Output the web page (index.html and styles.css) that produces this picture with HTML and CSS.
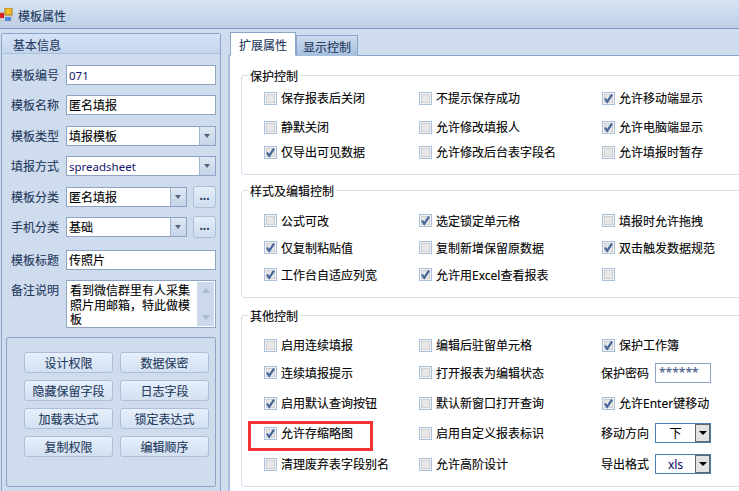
FILE: index.html
```html
<!DOCTYPE html>
<html lang="zh">
<head>
<meta charset="utf-8">
<title>模板属性</title>
<link rel="stylesheet" href="styles.css">
</head>
<body>
<svg class="defs" width="0" height="0" aria-hidden="true"><symbol id="tick" viewBox="0 0 11 11"><path d="M2 5.5 L4.2 8.8 L9 1.6" fill="none" stroke="#44659a" stroke-width="2.2"/></symbol></svg>
<div class="app">
  <header class="titlebar">
    <svg class="appicon" width="14" height="14" viewBox="0 0 14 14"><rect x="0" y="3" width="13" height="11" fill="#c9ccd2"/><rect x="0" y="5" width="4" height="5" fill="#d8201c"/><rect x="5" y="0" width="7" height="7" fill="#f4bd2c" stroke="#a9821e" stroke-width="1"/><rect x="5" y="9" width="6" height="4" fill="#4f8be0"/></svg>
    <span>模板属性</span>
  </header>
  <div class="main">
    <aside class="side">
      <div class="side-head">基本信息</div>
      <div class="form">
        <label class="lbl">模板编号</label><div class="input latin">071</div>
        <label class="lbl">模板名称</label><div class="input">匿名填报</div>
        <label class="lbl">模板类型</label><div class="combo"><span>填报模板</span><i class="drop"></i></div>
        <label class="lbl">填报方式</label><div class="combo"><span class="latin">spreadsheet</span><i class="drop"></i></div>
        <label class="lbl">模板分类</label><div class="pair"><div class="combo"><span>匿名填报</span><i class="drop"></i></div><button class="more">...</button></div>
        <label class="lbl">手机分类</label><div class="pair"><div class="combo"><span>基础</span><i class="drop"></i></div><button class="more">...</button></div>
        <label class="lbl">模板标题</label><div class="input">传照片</div>
        <label class="lbl">备注说明</label>
        <div class="memo"><div class="memo-text">看到微信群里有人采集照片用邮箱，特此做模板</div><div class="memo-bar"><i class="up"></i><i class="down"></i></div></div>
      </div>
      <div class="btnbox">
        <button class="btn">设计权限</button><button class="btn">数据保密</button>
        <button class="btn">隐藏保留字段</button><button class="btn">日志字段</button>
        <button class="btn">加载表达式</button><button class="btn">锁定表达式</button>
        <button class="btn">复制权限</button><button class="btn">编辑顺序</button>
      </div>
    </aside>
    <section class="content">
      <div class="tabs"><div class="tab active">扩展属性</div><div class="tab">显示控制</div></div>
      <div class="panel">
        <fieldset class="group g1">
          <legend>保护控制</legend>
          <div class="opts">
            <div class="opt"><i class="cb"></i>保存报表后关闭</div><div class="opt"><i class="cb"></i>不提示保存成功</div><div class="opt"><i class="cb"><svg><use href="#tick"/></svg></i>允许移动端显示</div>
            <div class="opt"><i class="cb"></i>静默关闭</div><div class="opt"><i class="cb"></i>允许修改填报人</div><div class="opt"><i class="cb"><svg><use href="#tick"/></svg></i>允许电脑端显示</div>
            <div class="opt"><i class="cb"><svg><use href="#tick"/></svg></i>仅导出可见数据</div><div class="opt"><i class="cb"></i>允许修改后台表字段名</div><div class="opt"><i class="cb"></i>允许填报时暂存</div>
          </div>
        </fieldset>
        <fieldset class="group g2">
          <legend>样式及编辑控制</legend>
          <div class="opts">
            <div class="opt"><i class="cb"></i>公式可改</div><div class="opt"><i class="cb"><svg><use href="#tick"/></svg></i>选定锁定单元格</div><div class="opt"><i class="cb"></i>填报时允许拖拽</div>
            <div class="opt"><i class="cb"><svg><use href="#tick"/></svg></i>仅复制粘贴值</div><div class="opt"><i class="cb"></i>复制新增保留原数据</div><div class="opt"><i class="cb"><svg><use href="#tick"/></svg></i>双击触发数据规范</div>
            <div class="opt"><i class="cb"><svg><use href="#tick"/></svg></i>工作台自适应列宽</div><div class="opt"><i class="cb"><svg><use href="#tick"/></svg></i>允许用Excel查看报表</div><div class="opt"><i class="cb"></i></div>
          </div>
        </fieldset>
        <fieldset class="group g3">
          <legend>其他控制</legend>
          <div class="opts">
            <div class="opt"><i class="cb"></i>启用连续填报</div><div class="opt"><i class="cb"></i>编辑后驻留单元格</div><div class="opt"><i class="cb"><svg><use href="#tick"/></svg></i>保护工作簿</div>
            <div class="opt"><i class="cb"><svg><use href="#tick"/></svg></i>连续填报提示</div><div class="opt"><i class="cb"></i>打开报表为编辑状态</div><div class="field"><span>保护密码</span><div class="pwd">******</div></div>
            <div class="opt"><i class="cb"><svg><use href="#tick"/></svg></i>启用默认查询按钮</div><div class="opt"><i class="cb"></i>默认新窗口打开查询</div><div class="opt"><i class="cb"><svg><use href="#tick"/></svg></i>允许Enter键移动</div>
            <div class="opt"><i class="cb"><svg><use href="#tick"/></svg></i>允许存缩略图</div><div class="opt"><i class="cb"></i>启用自定义报表标识</div><div class="field"><span>移动方向</span><div class="sel"><span>下</span><i class="selbtn"></i></div></div>
            <div class="opt"><i class="cb"></i>清理废弃表字段别名</div><div class="opt"><i class="cb"></i>允许高阶设计</div><div class="field"><span>导出格式</span><div class="sel"><span class="xls">xls</span><i class="selbtn"></i></div></div>
          </div>
        </fieldset>
      </div>
    </section>
  </div>
  <div class="redbox"></div>
</div>
</body>
</html>
```
FILE: styles.css
```css
* { box-sizing: border-box; }
html, body { margin: 0; padding: 0; }
body { width: 739px; height: 491px; overflow: hidden; background: #cfdcee; font: 12px/16px "Noto Sans", "Noto Sans CJK SC", sans-serif; color: #000; -webkit-text-stroke: 0.1px; }
.defs { position: absolute; }
.app { position: relative; width: 739px; height: 491px; overflow: hidden; }

.titlebar { height: 29px; display: flex; align-items: center; gap: 4px; padding-top: 6px; padding-bottom: 2px; background: linear-gradient(#d8e4f3, #bccfe6); border-bottom: 1px solid #7f9abd; color: #1e395b; }
.titlebar span { padding-top: 1px; }
.appicon { flex: none; margin-top: -2px; }

.main { display: flex; height: 462px; }

.side { flex: none; width: 220px; margin: 4px 0 0 1px; height: 470px; border: 1px solid #8ba5c8; border-radius: 2px 2px 0 0; color: #1e395b; }
.side-head { height: 20px; padding: 3px 0 0 11px; background: linear-gradient(#d5e3f6, #c3d5ee); border-bottom: 1px solid #a9c0de; line-height: 18px; }
.form { display: grid; grid-template-columns: 55px 150px; grid-template-rows: 30px 31px 30px 31px 30px 33px 30px 48px; padding: 11px 0 0 9px; height: 283px; align-items: start; }
.lbl { line-height: 20px; margin-top: 1px; }
.input { height: 20px; background: #fff; border: 1px solid #8fa4c4; padding: 1px 0 0 2px; line-height: 18px; color: #000; }
.input.latin, .combo > .latin { color: #14146e; font-size: 11.5px; -webkit-text-stroke: 0; }
.combo { height: 20px; flex: 1; min-width: 0; display: flex; background: #fff; border: 1px solid #8fa4c4; line-height: 18px; color: #000; }
.combo > span { flex: 1; padding: 1px 0 0 2px; }
.drop { width: 16px; background: linear-gradient(#dfe8f4, #c5d4e8); border-left: 1px solid #a3b6d0; position: relative; }
.drop::after { content: ""; position: absolute; left: 4px; top: 7px; border: 3px solid transparent; border-width: 4px 3.5px 0; border-top-color: #52637c; }
.pair { display: flex; gap: 6px; align-items: flex-start; }
.more { flex: none; width: 23px; height: 22px; margin-top: -1px; padding: 0 0 3px; font: inherit; font-weight: 700; color: #1e395b; background: linear-gradient(#e4eef9, #cfdded); border: 1px solid #adbed6; border-radius: 3px; }
.memo { height: 48px; display: flex; background: #fff; border: 1px solid #8fa4c4; color: #000; padding: 1px 1px 1px 3px; }
.memo-text { flex: 1; line-height: 14.5px; width: 124px; padding-top: 2px; }
.memo-bar { flex: none; width: 17px; background: #ccd9ea; display: flex; flex-direction: column; justify-content: space-between; align-items: center; padding: 6px 0; }
.up, .down { display: block; border: 5px solid transparent; border-left-width: 4.5px; border-right-width: 4.5px; }
.up { border-top: 0; border-bottom-color: #a9b8cc; }
.down { border-bottom: 0; border-top-color: #a9b8cc; }

.btnbox { margin: 0 0 0 4px; width: 210px; height: 150px; border: 1px solid #8fa4c4; border-radius: 2px; padding: 14px 0 0 17px; display: grid; grid-template-columns: 89px 89px; grid-auto-rows: 21px; gap: 7px; }
.btn { font: inherit; -webkit-text-stroke: inherit; color: #1e395b; padding: 2px 0 0; background: linear-gradient(#e7f0fb, #d2e0f1); border: 1px solid #adbed6; border-radius: 3px; }

.content { flex: 1; min-width: 0; margin-left: 7px; position: relative; }
.tabs { display: flex; align-items: flex-end; height: 27px; padding: 4px 0 0 2px; margin-bottom: -1px; }
.tab { height: 21px; width: 62px; text-align: center; line-height: 23px; color: #1e395b; background: linear-gradient(#cfdcee, #a5bedc); border: 1px solid #88a5cb; border-bottom: 0; position: relative; z-index: 1; }
.tab.active { height: 24px; width: 66px; background: #fff; line-height: 26px; z-index: 2; border-bottom: 1px solid #fff; }
.panel { height: 440px; background: #fff; border-top: 1px solid #88a5cb; border-left: 2px solid #a7bfdf; padding: 11px 0 0 11px; }

.group { margin: 0 -30px 0 0; border: 1px solid #d4dfe9; border-radius: 3px; padding: 0 0 0 22px; min-width: 0; }
.group legend { margin-left: -16px; padding: 0 2px; line-height: 19px; height: 16px; color: #000; }
.opts { display: grid; grid-template-columns: 155px 183px 1fr; align-items: center; }
.g1 { height: 108px; padding-top: 1px; }
.g1 .opts { grid-template-rows: 28px 30px 20px; }
.g2 { height: 116px; margin-top: 7px; padding-top: 9px; }
.g2 .opts { grid-template-rows: 27px 27px 27px; }
.g3 { height: 180px; margin-top: 9px; padding-top: 8px; }
.g3 .opts { grid-template-rows: 28px 27px 34px 26px 36px; }
.opt { display: flex; align-items: center; gap: 4px; line-height: 16px; white-space: nowrap; padding-top: 2px; }
.cb { flex: none; display: block; width: 13px; height: 13px; margin-top: -2px; background: #e7e7e7; border: 1px solid #a9bfdc; box-shadow: inset 0 0 0 1px #f3f3f3, inset 0 0 0 2px #cfcfcf; }
.cb svg { display: block; width: 11px; height: 11px; }

.field { display: flex; align-items: center; margin-left: -1px; }
.field > span { width: 54px; padding-top: 2px; }
.pwd { width: 56px; height: 20px; border: 1px solid #8fa4c4; padding-left: 3px; line-height: 18px; color: #41598c; }
.sel { width: 56px; height: 20px; display: flex; border: 1px solid #4a7db5; background: #fff; line-height: 18px; }
.sel > span { flex: 1; text-align: center; padding-top: 1px; }
.xls { color: #14146e; }
.selbtn { width: 15px; background: #e3e3e3; border: 1px solid #666; position: relative; }
.selbtn::after { content: ""; position: absolute; left: 3px; top: 6px; border: 4px solid transparent; border-bottom: 0; border-top-color: #000; }

.redbox { position: absolute; left: 248px; top: 421px; width: 125px; height: 30px; border: 3px solid #f33333; }
```
